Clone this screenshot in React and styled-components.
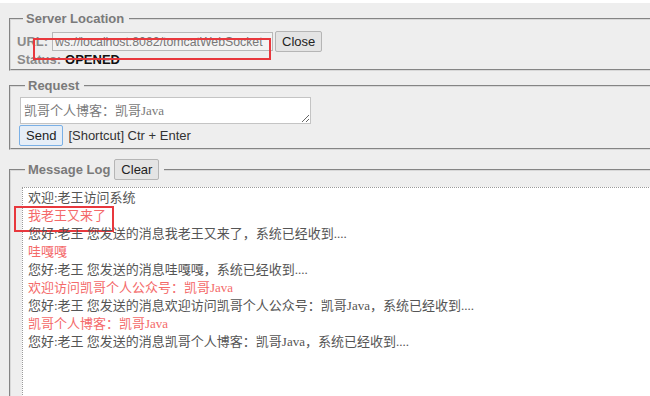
import React from 'react'
import styled, { createGlobalStyle } from 'styled-components'

const GlobalStyle = createGlobalStyle`
  html, body {
    margin: 0;
    padding: 0;
    background: #ffffff;
    overflow: hidden;
  }
  body {
    font-family: "Liberation Sans", Arial, sans-serif;
  }
`

const messages = [
  { text: '欢迎:老王访问系统', mine: false },
  { text: '我老王又来了', mine: true },
  { text: '您好:老王 您发送的消息我老王又来了，系统已经收到....', mine: false },
  { text: '哇嘎嘎', mine: true },
  { text: '您好:老王 您发送的消息哇嘎嘎，系统已经收到....', mine: false },
  { text: '欢迎访问凯哥个人公众号：凯哥Java', mine: true },
  { text: '您好:老王 您发送的消息欢迎访问凯哥个人公众号：凯哥Java，系统已经收到....', mine: false },
  { text: '凯哥个人博客：凯哥Java', mine: true },
  { text: '您好:老王 您发送的消息凯哥个人博客：凯哥Java，系统已经收到....', mine: false },
]

function App() {
  return (
    <>
      <GlobalStyle />
      <Viewport>
        <Page>
          <Group pad={6}>
            <Legend>Server Location</Legend>
            <UrlRow>
              <Label>URL:</Label>
              <UrlInput defaultValue="ws://localhost:8082/tomcatWebSocket" />
              <Button>Close</Button>
              <Mark />
            </UrlRow>
            <StatusRow>
              <Label>Status:</Label>
              <Status>OPENED</Status>
            </StatusRow>
          </Group>

          <Group pad={8} gap={6}>
            <Legend>Request</Legend>
            <RequestBox defaultValue="凯哥个人博客：凯哥Java" />
            <SendRow>
              <Button focused>Send</Button>
              <Hint>[Shortcut] Ctr + Enter</Hint>
            </SendRow>
          </Group>

          <Group pad={8} gap={9} grow>
            <Legend>
              <LegendRow>
                Message Log <Button>Clear</Button>
              </LegendRow>
            </Legend>
            <Log>
              {messages.map((m, i) => (
                <LogLine key={i} mine={m.mine}>
                  {m.text}
                  {i === 1 ? <LineMark /> : null}
                </LogLine>
              ))}
            </Log>
          </Group>
        </Page>
      </Viewport>
    </>
  )
}

const Viewport = styled.div`
  width: 100%;
  height: 396px;
  overflow: hidden;
  background: #ffffff;
`

const Page = styled.div`
  margin-top: 3px;
  height: 430px;
  background: #eeeeee;
  padding-top: 7px;
  box-sizing: border-box;
  display: flex;
  flex-direction: column;
`

const Group = styled.fieldset`
  margin: ${(p) => p.gap || 0}px 0 0 9px;
  padding: 0 0 2px ${(p) => p.pad}px;
  width: 720px;
  border: 2px groove #d8d8d8;
  border-right: none;
  min-width: 0;
  flex: ${(p) => (p.grow ? '1 0 auto' : 'none')};
  display: flex;
  flex-direction: column;
`

const Legend = styled.legend`
  margin-left: 6px;
  padding: 0 5px 0 3px;
  font-family: "Liberation Sans", Arial, sans-serif;
  font-weight: bold;
  font-size: 13px;
  line-height: 18px;
  color: #7a7a7a;
`

const LegendRow = styled.span`
  display: inline-flex;
  align-items: center;
  gap: 2px;
`

const UrlRow = styled.div`
  position: relative;
  display: flex;
  align-items: center;
  margin-top: 3px;
  height: 21px;
`

const Label = styled.span`
  font-size: 13px;
  font-weight: bold;
  color: #8a8a8a;
  margin-right: 4px;
`

const UrlInput = styled.input`
  width: 216px;
  height: 17px;
  padding: 0 1px 0 2px;
  border: 1px solid #b8b8b8;
  background: #f3f3f3;
  font-family: "Liberation Sans", Arial, sans-serif;
  font-size: 12.3px;
  color: #777;
  outline: none;
`

const Button = styled.button`
  margin-left: 2px;
  height: 21px;
  padding: 0 6px;
  border: 1px solid ${(p) => (p.focused ? '#7ab0e6' : '#b5b5b5')};
  border-radius: 2px;
  background: ${(p) => (p.focused ? '#e6eef7' : '#e4e4e4')};
  font-family: "Liberation Sans", Arial, sans-serif;
  font-size: 13px;
  font-weight: normal;
  color: #222;
`

const Mark = styled.div`
  position: absolute;
  left: 16px;
  top: 7px;
  width: 234px;
  height: 18px;
  border: 2px solid #e8383d;
`

const StatusRow = styled.div`
  font-size: 13px;
  line-height: 14px;
  margin-top: 1px;
`

const Status = styled.span`
  font-weight: bold;
  color: #111;
`

const RequestBox = styled.textarea`
  margin: 2px 0 0 1px;
  width: 283px;
  height: 21px;
  padding: 2px 3px;
  border: 1px solid #c4c4c4;
  background: #ffffff;
  font-family: "Liberation Serif", "Noto Sans CJK SC", serif;
  font-size: 13px;
  color: #7a7a7a;
  outline: none;
`

const SendRow = styled.div`
  display: flex;
  align-items: center;
  gap: 5px;
  margin-top: 1px;
  & > button {
    margin-left: 0;
    height: 21px;
    padding: 0 6px;
  }
`

const Hint = styled.span`
  font-size: 13px;
  color: #333;
`

const Log = styled.div`
  position: relative;
  margin: 7px 0 0 3px;
  flex: 1;
  border: 1px dotted #9a9a9a;
  background: #ffffff;
  padding: 1px 5px;
`

const LogLine = styled.div`
  position: relative;
  font-family: "Liberation Serif", "Noto Sans CJK SC", serif;
  font-size: 13px;
  line-height: 18px;
  color: ${(p) => (p.mine ? '#f46a6a' : '#555555')};
  white-space: nowrap;
`

const LineMark = styled.span`
  position: absolute;
  left: -14px;
  top: -1px;
  width: 96px;
  height: 22px;
  border: 2px solid #e8383d;
`

export default App
